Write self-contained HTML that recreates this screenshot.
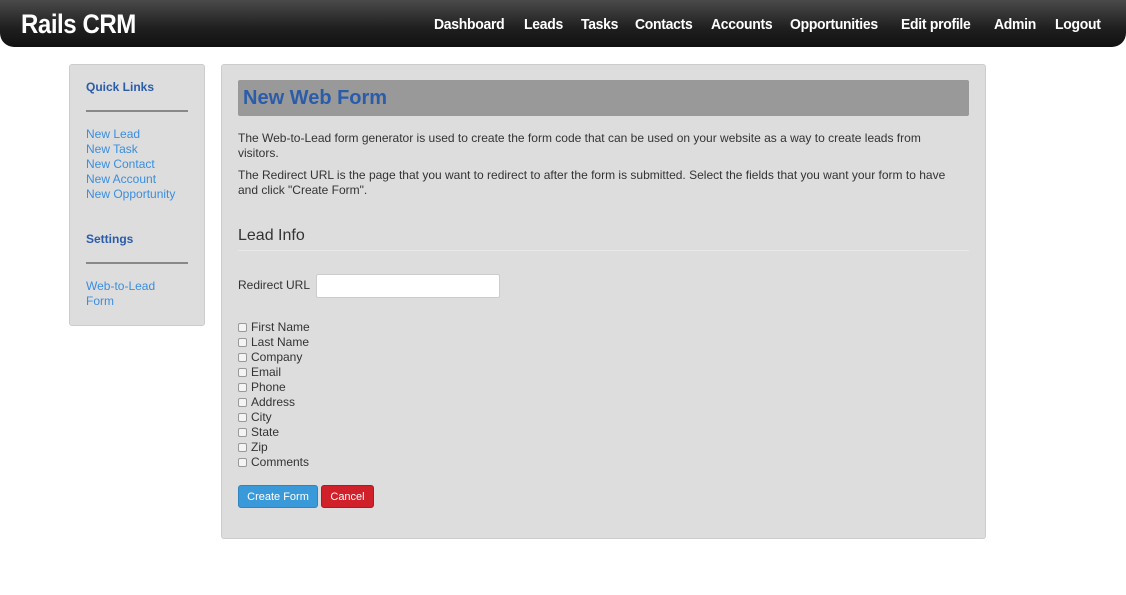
<!DOCTYPE html>
<html><head><style>
*{margin:0;padding:0;box-sizing:border-box}
body{width:1126px;height:595px;background:#fff;font-family:"Liberation Sans",Arial,sans-serif;position:relative;overflow:hidden;color:#333}
.hdr{position:absolute;left:0;top:0;width:1126px;height:47px;background:linear-gradient(#4a4a4a,#1f1f1f 60%,#111);border-radius:0 0 14px 14px}
.brand{position:absolute;left:21px;top:9px;color:#fff;font-weight:bold;font-size:27px;letter-spacing:-0.5px;transform:scaleX(0.89);transform-origin:left}
.nav{position:absolute;top:16px;color:#fff;font-weight:bold;font-size:15px;letter-spacing:-0.3px;white-space:nowrap;transform:scaleX(0.93);transform-origin:left}
.side{position:absolute;left:69px;top:64px;width:136px;height:262px;background:#ddd;border:1px solid #ccc;border-radius:3px}
.side h4{position:absolute;left:16px;font-size:12px;color:#2a5caa}
.side hr{position:absolute;left:16px;width:102px;border:0;border-top:2px solid #888}
.side .l{position:absolute;left:16px;font-size:12px;color:#3a8ee0;line-height:15px}
.main{position:absolute;left:221px;top:64px;width:765px;height:475px;background:#ddd;border:1px solid #ccc;border-radius:3px}
.tb{position:absolute;left:16px;top:15px;width:731px;height:36px;background:#999;border-radius:2px}
.tb span{position:absolute;left:5px;top:7px;font-size:20px;font-weight:bold;color:#2a5caa}
.p{position:absolute;left:16px;font-size:12px;line-height:15px;width:720px}
.cb{position:absolute;left:16px;font-size:12px;line-height:15px}
.cb i{display:inline-block;width:9px;height:9px;border:1px solid #999;background:#f4f4f4;border-radius:2px;margin-right:4px;vertical-align:-1px}
.btn{position:absolute;top:420px;height:23px;color:#fff;font-size:11px;text-align:center;line-height:22px;border-radius:3px}
</style></head><body>
<div class="hdr">
<div class="brand">Rails CRM</div>
<span class="nav" style="left:434px">Dashboard</span>
<span class="nav" style="left:524px">Leads</span>
<span class="nav" style="left:581px">Tasks</span>
<span class="nav" style="left:635px">Contacts</span>
<span class="nav" style="left:711px">Accounts</span>
<span class="nav" style="left:790px">Opportunities</span>
<span class="nav" style="left:901px">Edit profile</span>
<span class="nav" style="left:994px">Admin</span>
<span class="nav" style="left:1055px">Logout</span>
</div>
<div class="side">
<h4 style="top:15px">Quick Links</h4>
<hr style="top:45px">
<div class="l" style="top:62px">New Lead<br>New Task<br>New Contact<br>New Account<br>New Opportunity</div>
<h4 style="top:167px">Settings</h4>
<hr style="top:197px">
<div class="l" style="top:214px">Web-to-Lead<br>Form</div>
</div>
<div class="main">
<div class="tb"><span>New Web Form</span></div>
<div class="p" style="top:66px">The Web-to-Lead form generator is used to create the form code that can be used on your website as a way to create leads from visitors.</div>
<div class="p" style="top:103px">The Redirect URL is the page that you want to redirect to after the form is submitted. Select the fields that you want your form to have and click "Create Form".</div>
<div style="position:absolute;left:16px;top:162px;font-size:16px;color:#333">Lead Info</div>
<div style="position:absolute;left:16px;top:185px;width:731px;border-top:1px solid #e8e8e8"></div>
<div style="position:absolute;left:16px;top:213px;font-size:12px">Redirect URL</div>
<div style="position:absolute;left:94px;top:209px;width:184px;height:24px;background:#fff;border:1px solid #ccc;border-radius:2px"></div>
<div class="cb" style="top:255px"><i></i>First Name<br><i></i>Last Name<br><i></i>Company<br><i></i>Email<br><i></i>Phone<br><i></i>Address<br><i></i>City<br><i></i>State<br><i></i>Zip<br><i></i>Comments</div>
<div class="btn" style="left:16px;width:80px;background:#3a9ad9;border:1px solid #2f85c0">Create Form</div>
<div class="btn" style="left:99px;width:53px;background:#d0202a;border:1px solid #b01820">Cancel</div>
</div>
</body></html>
